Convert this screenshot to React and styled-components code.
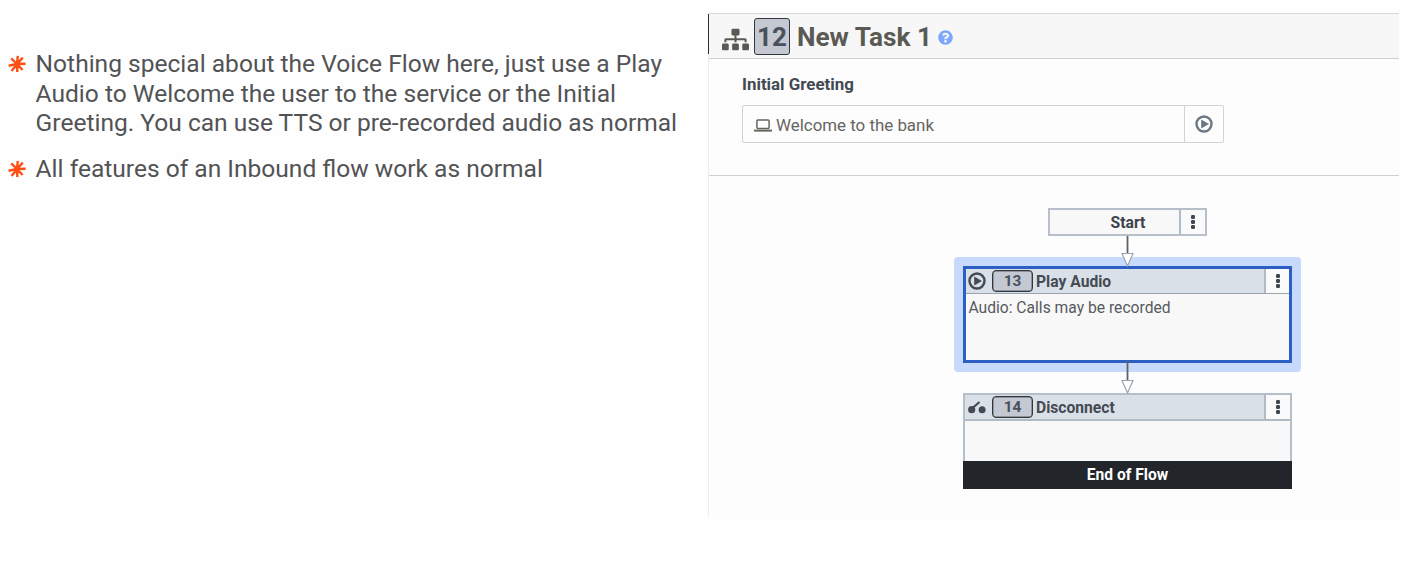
import React from "react";
import styled, { createGlobalStyle } from "styled-components";
import { FaSitemap, FaQuestionCircle } from "react-icons/fa";

const GlobalStyle = createGlobalStyle`
  * { box-sizing: border-box; }
  body { margin: 0; background: #fefefe; font-family: Roboto, "Liberation Sans", sans-serif; }
  svg { display: block; flex: none; }
`;

const Slide = styled.main`
  display: flex;
  width: 1408px;
  height: 580px;
  overflow: hidden;
`;

const Notes = styled.ul`
  list-style: none;
  margin: 0;
  padding: 49px 0 0 8px;
  width: 708px;
  flex: none;
`;

const Note = styled.li`
  display: flex;
  gap: 9.6px;
  margin-bottom: 16px;
  color: #525355;
  font-size: 24.55px;
  line-height: 29.6px;
  white-space: nowrap;
  svg { margin-top: 6px; }
`;

const Panel = styled.section`
  width: 691px;
  height: 503px;
  margin-top: 13px;
  border-left: 1px solid #ecedee;
  background: #fdfdfd;
`;

const PanelHeader = styled.header`
  display: flex;
  align-items: center;
  height: 46px;
  border-top: 1px solid #d3d6d9;
  border-bottom: 1px solid #ccd0d2;
  background: #f7f7f7;
  color: #5b5954;
`;

const Marker = styled.span`
  align-self: flex-start;
  width: 1px;
  height: 40px;
  margin: 0 13px 0 -1px;
  background: #2a2d33;
`;

const TaskIcon = styled.span`
  margin-right: 5px;
  padding-top: 6px;
`;

const HelpIcon = styled.span`
  padding-top: 2px;
  margin-left: -1px;
  color: #7da7fb;
`;

const Badge = styled.span`
  display: flex;
  align-items: center;
  justify-content: center;
  flex: none;
  width: ${(p) => (p.$large ? "36px" : "41px")};
  height: ${(p) => (p.$large ? "37px" : "22px")};
  border: 1px solid #33373d;
  border-radius: ${(p) => (p.$large ? "3px" : "4px")};
  box-shadow: ${(p) => (p.$large ? "none" : "inset 0 0 0 0.5px #5b6068")};
  background: #c3c8d2;
  color: #4a515b;
  font-size: ${(p) => (p.$large ? "26px" : "15.4px")};
  font-weight: 700;
  line-height: 1;
  padding-top: ${(p) => (p.$large ? "2px" : "1px")};
`;

const Title = styled.h1`
  margin: 0 7px;
  padding-top: 2px;
  font-size: 26.2px;
  line-height: 42px;
  font-weight: 700;
`;

const Greeting = styled.div`
  height: 117px;
  padding: 15px 33px 0;
  border-bottom: 1px solid #cfd2d4;
`;

const Label = styled.h2`
  margin: 0 0 11px;
  font-size: 16.9px;
  line-height: 20px;
  font-weight: 700;
  color: #444a53;
`;

const Field = styled.div`
  display: flex;
  width: 482px;
  height: 38px;
  border: 1px solid #cfd4d7;
  border-radius: 2px;
`;

const FieldValue = styled.div`
  display: flex;
  align-items: center;
  gap: 4px;
  flex: 1;
  padding: 1px 0 0 11px;
  border-right: 1px solid #cfd4d7;
  color: #66655f;
  font-size: 16.9px;
  svg { margin-top: 1px; }
`;

const FieldButton = styled.div`
  display: flex;
  align-items: center;
  justify-content: center;
  width: 38px;
  padding-right: 1px;
  color: #6d7684;
`;

const Canvas = styled.div`
  display: flex;
  flex-direction: column;
  align-items: center;
  padding: 32px 0 0 147px;
`;

const StartNode = styled.div`
  display: flex;
  width: 159px;
  height: 28px;
  border: 2px solid #b7c0ca;
  background: #f8f8f8;
`;

const StartLabel = styled.div`
  flex: 1;
  padding: 1px 0 0 27px;
  text-align: center;
  font-size: 15.7px;
  line-height: 23px;
  font-weight: 700;
  color: #3d434c;
`;

const NodeMenu = styled.div`
  display: flex;
  align-items: center;
  justify-content: center;
  width: ${(p) => (p.$narrow ? "25px" : "26px")};
  border-left: 2px solid #b1bbc5;
  background: #fafafa;
  color: #3f4650;
`;

const Halo = styled.div`
  padding: 9px;
  border-radius: 4px;
  background: #c8dafc;
`;

const Node = styled.article`
  width: 329px;
  height: ${(p) => (p.$selected ? "97px" : "96px")};
  border: ${(p) => (p.$selected ? "3px solid #2b5fc4" : "2px solid #b5bfc9")};
  ${(p) => !p.$selected && "border-bottom: 0;"}
  background: #f8f8f8;
`;

const NodeHeader = styled.div`
  display: flex;
  height: ${(p) => (p.$selected ? "25px" : "26px")};
  border-bottom: ${(p) => (p.$selected ? "1px solid #98a4b0" : "2px solid #b1bbc5")};
`;

const NodeTitle = styled.div`
  display: flex;
  align-items: center;
  flex: 1;
  padding-left: ${(p) => (p.$selected ? "2px" : "3px")};
  background: #dae0e8;
  color: #444a53;
  font-size: 15.65px;
  font-weight: 700;
`;

const NodeIcon = styled.span`
  width: 24px;
`;

const NodeName = styled.span`
  margin-left: 3px;
  padding-top: 1px;
`;

const NodeBody = styled.div`
  height: ${(p) => p.$height};
  padding: 4px 2.4px;
  color: #555a61;
  font-size: 15.65px;
  line-height: 20px;
`;

const EndBar = styled.div`
  height: 28px;
  margin: 0 -2px;
  background: #22262a;
  color: #fff;
  text-align: center;
  font-size: 15.6px;
  line-height: 28px;
  font-weight: 700;
`;

const ArrowBox = styled.div`
  position: relative;
  z-index: 1;
  height: ${(p) => p.$height};
  margin: ${(p) => p.$margin};
`;

const Burst = () => (
  <svg width="18" height="18" viewBox="0 0 18 18" stroke="#ff4f12" strokeWidth="2.4">
    <path d="M9.8 0.8 9 9M14.8 2.6 9 9M17.6 8.7 9 9M14.6 15 9 9M9.3 17 9 9M3.6 16 9 9M.6 10.7 9 9M3.2 3.4 9 9" />
  </svg>
);

const Play = ({ size }) => (
  <svg width={size} height={size} viewBox="0 0 18 18">
    <circle cx="9" cy="9" r="7.5" fill="none" stroke="currentColor" strokeWidth="2.4" />
    <path d="M6.2 4.6 14 9 6.2 13.4Z" fill="currentColor" />
  </svg>
);

const Laptop = () => (
  <svg width="18" height="13" viewBox="0 0 18 13" fill="none" stroke="currentColor">
    <rect x="2.9" y="1.1" width="12.2" height="8.4" rx="1" strokeWidth="1.5" />
    <path d="M0 11.6H18" strokeWidth="2" />
  </svg>
);

const HangUp = () => (
  <svg width="18" height="13" viewBox="0 0 18 13" fill="currentColor">
    <circle cx="3.7" cy="8.7" r="3.6" />
    <circle cx="14.1" cy="8.7" r="3.5" />
    <path d="M4 7.5 11.5 1" stroke="currentColor" strokeWidth="2.2" />
  </svg>
);

const Dots = () => (
  <svg width="4" height="14" viewBox="0 0 4 14" fill="currentColor">
    <rect y="0" width="4" height="4" rx="1.3" />
    <rect y="5" width="4" height="4" rx="1.3" />
    <rect y="10" width="4" height="4" rx="1.3" />
  </svg>
);

const Arrow = ({ length, margin }) => (
  <ArrowBox $height={length + "px"} $margin={margin}>
    <svg width="13" height={length} viewBox={`0 0 13 ${length}`}>
      <path d={`M6.5 0V${length - 13}`} stroke="#5d626b" strokeWidth="1.8" />
      <path d={`M1 ${length - 13.5}H12L6.5 ${length - 1}Z`} fill="#fff" stroke="#9ba6b1" strokeWidth="1.2" />
    </svg>
  </ArrowBox>
);

export default function App() {
  return (
    <Slide>
      <GlobalStyle />
      <Notes>
        <Note>
          <Burst />
          <div>
            Nothing special about the Voice Flow here, just use a Play
            <br />
            Audio to Welcome the user to the service or the Initial
            <br />
            Greeting. You can use TTS or pre-recorded audio as normal
          </div>
        </Note>
        <Note>
          <Burst />
          <div>All features of an Inbound flow work as normal</div>
        </Note>
      </Notes>
      <Panel>
        <PanelHeader>
          <Marker />
          <TaskIcon>
            <FaSitemap size={27} />
          </TaskIcon>
          <Badge $large>12</Badge>
          <Title>New Task 1</Title>
          <HelpIcon>
            <FaQuestionCircle size={15} />
          </HelpIcon>
        </PanelHeader>
        <Greeting>
          <Label>Initial Greeting</Label>
          <Field>
            <FieldValue>
              <Laptop />
              Welcome to the bank
            </FieldValue>
            <FieldButton>
              <Play size={18} />
            </FieldButton>
          </Field>
        </Greeting>
        <Canvas>
          <StartNode>
            <StartLabel>Start</StartLabel>
            <NodeMenu>
              <Dots />
            </NodeMenu>
          </StartNode>
          <Arrow length={31} margin="0 0 -10px" />
          <Halo>
            <Node $selected>
              <NodeHeader $selected>
                <NodeTitle $selected>
                  <NodeIcon>
                    <Play size={18} />
                  </NodeIcon>
                  <Badge>13</Badge>
                  <NodeName>Play Audio</NodeName>
                </NodeTitle>
                <NodeMenu $narrow>
                  <Dots />
                </NodeMenu>
              </NodeHeader>
              <NodeBody>Audio: Calls may be recorded</NodeBody>
            </Node>
          </Halo>
          <Arrow length={33} margin="-11px 0 -1px" />
          <Node>
            <NodeHeader>
              <NodeTitle>
                <NodeIcon>
                  <HangUp />
                </NodeIcon>
                <Badge>14</Badge>
                <NodeName>Disconnect</NodeName>
              </NodeTitle>
              <NodeMenu>
                <Dots />
              </NodeMenu>
            </NodeHeader>
            <NodeBody $height="40px" />
            <EndBar>End of Flow</EndBar>
          </Node>
        </Canvas>
      </Panel>
    </Slide>
  );
}
